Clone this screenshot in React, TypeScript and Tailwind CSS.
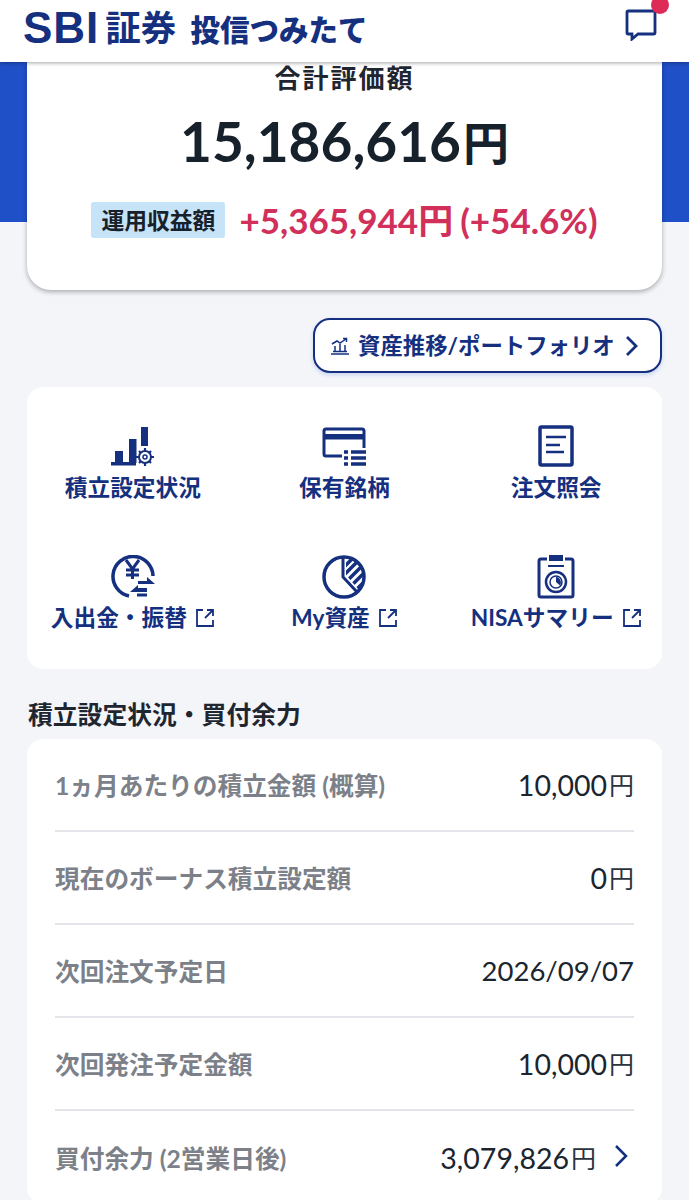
const navy = "#14307f";

function Ext() {
  return (
    <svg width="20" height="20" viewBox="0 0 20 20" fill="none" stroke={navy} strokeWidth="1.800" className="shrink-0">
      <path d="M8 2H2v16h16v-6" />
      <path d="M12 2h6v6M18 2l-8 8" />
    </svg>
  );
}

function IconBars() {
  return (
    <svg width="46" height="40" viewBox="0 0 46 40" fill={navy}>
      <rect x="1" y="35" width="25" height="3.500" />
      <rect x="5" y="24" width="8" height="12" />
      <rect x="19" y="12" width="7.500" height="24" />
      <rect x="31" y="0" width="7" height="19" />
      <circle cx="35" cy="30" r="6" fill="none" stroke={navy} strokeWidth="2" />
      <circle cx="35" cy="30" r="2" fill="none" stroke={navy} strokeWidth="1.500" />
      <path d="M35 21v3M35 36v3M26 30h3M41 30h3M29 24l2 2M39 34l2 2M29 36l2-2M39 26l2-2" stroke={navy} strokeWidth="2.200" />
    </svg>
  );
}

function IconCard() {
  return (
    <svg width="44" height="40" viewBox="0 0 44 40" fill="none" stroke={navy} strokeWidth="3">
      <path d="M20 29H4a2 2 0 0 1-2-2V4a2 2 0 0 1 2-2h36a2 2 0 0 1 2 2v17" />
      <rect x="2" y="7" width="40" height="5.500" fill={navy} stroke="none" />
      <path d="M29 25h15M29 31h15M29 37h15M22 25h4M22 31h4M22 37h4" strokeWidth="3.400" />
    </svg>
  );
}

function IconDoc() {
  return (
    <svg width="36" height="42" viewBox="0 0 36 42" fill="none" stroke={navy}>
      <rect x="2" y="2" width="32" height="38" rx="1.500" strokeWidth="3.500" />
      <path d="M8 12h20M8 20h14M8 27h18" strokeWidth="2.500" />
    </svg>
  );
}

function IconYen() {
  return (
    <svg width="44" height="44" viewBox="0 0 44 44" fill="none" stroke={navy}>
      <path d="M42 21A20 20 0 1 0 18 41" strokeWidth="3.500" />
      <path d="M15 5l6.500 9L28 5M21.500 14v10M15 15h13M15 20h13" strokeWidth="3" />
      <path d="M27 26h9v-4l8 7H27zM36 33H27v-3l-8 7h17zM27 37v-3" fill={navy} stroke="none" />
      <path d="M26 40h10" strokeWidth="3" />
    </svg>
  );
}

function IconPie() {
  return (
    <svg width="44" height="44" viewBox="0 0 44 44" fill="none" stroke={navy}>
      <defs>
        <clipPath id="pie-wedge">
          <path d="M24 3A19 19 0 0 1 37 35L24 20z" />
        </clipPath>
      </defs>
      <circle cx="22" cy="22" r="20" strokeWidth="3.500" />
      <path d="M21 3v19l14 15" strokeWidth="3" />
      <g clipPath="url(#pie-wedge)" strokeWidth="3.500">
        <path d="M18 16L34 0M22 20L42 0M26 25L46 5M30 30L50 10M34 35L54 15" />
      </g>
    </svg>
  );
}

function IconClip() {
  return (
    <svg width="38" height="44" viewBox="0 0 38 44" fill="none" stroke={navy}>
      <path d="M10 4H4a2 2 0 0 0-2 2v34a2 2 0 0 0 2 2h30a2 2 0 0 0 2-2V6a2 2 0 0 0-2-2h-6" strokeWidth="3" />
      <rect x="12" y="0" width="14" height="6" fill={navy} stroke="none" />
      <path d="M11 11h16" strokeWidth="2" />
      <circle cx="19" cy="27" r="10" strokeWidth="2.500" />
      <path d="M19 22v5l4 3.500a5.500 5.500 0 0 0-4-8.500z" fill={navy} stroke="none" />
      <circle cx="19" cy="27" r="6" strokeWidth="1.500" />
    </svg>
  );
}

function Tile({ icon, label, ext, h, gap }: { icon: React.ReactNode; label: string; ext?: boolean; h: string; gap: string }) {
  return (
    <div className={`flex flex-col items-center ${h}`}>
      <div className="flex h-[46px] items-end justify-center">{icon}</div>
      <div className={`${gap} flex items-center gap-[8px] whitespace-nowrap text-[22.7px] font-bold leading-[36px] text-[#14307f]`}>
        <span>{label}</span>
        {ext && <Ext />}
      </div>
    </div>
  );
}

function Row({ label, value, unit, chevron, last }: { label: string; value: string; unit?: boolean; chevron?: boolean; last?: boolean }) {
  return (
    <div className={`flex h-[93px] items-center justify-between pt-[3px] ${last ? "" : "border-b-2 border-[#e3e5ea]"}`}>
      <span className="mt-[-1px] whitespace-nowrap text-[24.7px] font-bold text-[#7c8189]">{label}</span>
      <span className="mt-[-2px] flex items-center whitespace-nowrap text-[#1b2530]">
        {unit ? (
          <>
            <span className="text-[28.5px] leading-none">{value}</span>
            <span className="ml-[2px] text-[25px] leading-none text-[#2b333c]">円</span>
          </>
        ) : (
          <span className="text-[27.5px] leading-none">{value}</span>
        )}
        {chevron && (
          <svg width="16" height="24" viewBox="0 0 16 24" fill="none" stroke={navy} strokeWidth="2.500" className="ml-[17px] mr-[5px] mt-[-4px]">
            <path d="M3 2l10 10L3 22" />
          </svg>
        )}
      </span>
    </div>
  );
}

export default function App() {
  return (
    <div className="h-[1200px] w-[689px] overflow-hidden bg-[#f3f5f9] font-['Lato','Noto_Sans_CJK_JP',sans-serif]">
      <header className="relative z-10 flex h-[62px] items-center justify-between bg-white pl-[23px] pr-[32px] shadow-[0_1px_4px_rgba(0,0,0,0.35)]">
        <div className="mb-[7px] flex items-center text-[#14307f]">
          <span className="font-['Liberation_Sans',sans-serif] text-[44px] font-bold leading-none tracking-[1px]">SBI</span>
          <span className="ml-[6px] text-[35.5px] font-bold leading-none">証券</span>
          <span className="ml-[14px] mt-[5px] text-[29.5px] font-black leading-none">投信つみたて</span>
        </div>
        <div className="relative mb-[12px] h-[32px] w-[32px]">
          <svg width="32" height="32" viewBox="0 0 32 32" fill="none" stroke={navy} strokeWidth="2.800">
            <path d="M3 2h26a1 1 0 0 1 1 1v21a1 1 0 0 1-1 1H13l-6 5v-5H3a1 1 0 0 1-1-1V3a1 1 0 0 1 1-1z" />
          </svg>
          <span className="absolute right-[-12px] top-[-13px] h-[18px] w-[18px] rounded-full bg-[#de2a56]" />
        </div>
      </header>

      <div className="bg-[linear-gradient(#2050c8_160px,#f3f5f9_160px)] px-[27px]">
        <section className="flex h-[228px] flex-col items-center rounded-b-[24px] bg-white shadow-[0_2px_5px_rgba(0,0,0,0.3)]">
          <div className="mt-[-1px] text-[26px] font-bold leading-[34px] tracking-[2px] text-[#1f2630]">合計評価額</div>
          <div className="mt-[13px] flex items-end text-[#17212b]">
            <span className="text-[55px] font-bold leading-[66px]">15,186,616</span>
            <span className="mb-[6px] ml-[2px] text-[46px] font-bold leading-[50px]">円</span>
          </div>
          <div className="mt-[28px] flex items-center">
            <span className="flex h-[36px] items-center rounded-[3px] bg-[#c6e3f7] px-[10px] text-[22.800px] font-bold text-[#17212b]">運用収益額</span>
            <span className="ml-[14px] flex items-center whitespace-nowrap font-bold text-[#d0305a]">
              <span className="text-[35px] leading-none">+5,365,944</span>
              <span className="text-[35px] font-bold leading-none">円</span>
              <span className="ml-[7px] text-[35px] leading-none">(+54.6%)</span>
            </span>
          </div>
        </section>

        <div className="mt-[28px] flex justify-end">
          <button className="flex h-[55px] w-[349px] items-center rounded-[17px] border-2 border-[#14307f] bg-white pl-[15px] shadow-[0_2px_4px_rgba(32,80,200,0.2)]">
            <svg width="20" height="18" viewBox="0 0 20 18" fill="none" stroke={navy} strokeWidth="1.500">
              <path d="M1 17h18M3 14.500h14M5 14V9M10 14V7M15 14V8" />
              <path d="M2 7l5-3 3 2 6-4M13 1.500h3.500V5" />
            </svg>
            <span className="ml-[8px] whitespace-nowrap text-[22.4px] font-bold text-[#14307f]">資産推移/ポートフォリオ</span>
            <svg width="14" height="22" viewBox="0 0 14 22" fill="none" stroke={navy} strokeWidth="2.800" className="ml-[10px]">
              <path d="M2 2l9 9-9 9" />
            </svg>
          </button>
        </div>

        <section className="mt-[14px] grid h-[282px] grid-cols-3 content-start rounded-[16px] bg-white pt-[34px]">
          <Tile h="h-[132px]" gap="mt-[3px]" icon={<IconBars />} label="積立設定状況" />
          <Tile h="h-[132px]" gap="mt-[3px]" icon={<IconCard />} label="保有銘柄" />
          <Tile h="h-[132px]" gap="mt-[3px]" icon={<IconDoc />} label="注文照会" />
          <Tile h="h-[116px]" gap="mt-[1px]" icon={<IconYen />} label="入出金・振替" ext />
          <Tile h="h-[116px]" gap="mt-[1px]" icon={<IconPie />} label="My資産" ext />
          <Tile h="h-[116px]" gap="mt-[1px]" icon={<IconClip />} label="NISAサマリー" ext />
        </section>

        <h2 className="mt-[28px] pl-[1px] text-[24.800px] font-bold leading-[36px] text-[#1f2630]">積立設定状況・買付余力</h2>

        <section className="mt-[6px] rounded-[16px] bg-white px-[28px]">
          <Row label="1ヵ月あたりの積立金額 (概算)" value="10,000" unit />
          <Row label="現在のボーナス積立設定額" value="0" unit />
          <Row label="次回注文予定日" value="2026/09/07" />
          <Row label="次回発注予定金額" value="10,000" unit />
          <Row label="買付余力 (2営業日後)" value="3,079,826" unit chevron last />
        </section>
      </div>
    </div>
  );
}
